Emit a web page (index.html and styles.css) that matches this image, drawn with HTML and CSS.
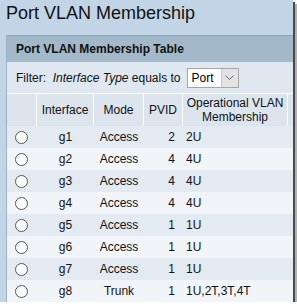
FILE: index.html
```html
<!DOCTYPE html>
<html>
<head>
<title>Port VLAN Membership</title>
<meta name="viewport" content="width=device-width, initial-scale=1">
<link rel="stylesheet" href="styles.css">
</head>
<body>
<div class="frame">
  <h1 class="title">Port VLAN Membership</h1>
  <div class="panel">
    <div class="panelHead">Port VLAN Membership Table</div>
    <div class="filter">
      <span>Filter:&nbsp; <i>Interface Type</i> equals to</span>
      <span class="select">
        <span class="selectValue">Port</span>
        <span class="selectArrow">
          <svg width="9" height="6" viewBox="0 0 9 6"><path d="M0.5 0.5 L4.5 4.5 L8.5 0.5" fill="none" stroke="#666" stroke-width="1"/></svg>
        </span>
      </span>
    </div>
    <table class="grid">
      <colgroup>
        <col class="cRadio"><col class="cIf"><col class="cMode"><col class="cPvid"><col class="cVlan"><col>
      </colgroup>
      <thead>
        <tr>
          <th></th>
          <th>Interface</th>
          <th>Mode</th>
          <th>PVID</th>
          <th>Operational VLAN<br>Membership</th>
          <th></th>
        </tr>
      </thead>
      <tbody>
        <tr><td class="radio"><input type="radio" name="port"></td><td class="center">g1</td><td class="center">Access</td><td class="num">2</td><td class="vlan">2U</td><td></td></tr>
        <tr><td class="radio"><input type="radio" name="port"></td><td class="center">g2</td><td class="center">Access</td><td class="num">4</td><td class="vlan">4U</td><td></td></tr>
        <tr><td class="radio"><input type="radio" name="port"></td><td class="center">g3</td><td class="center">Access</td><td class="num">4</td><td class="vlan">4U</td><td></td></tr>
        <tr><td class="radio"><input type="radio" name="port"></td><td class="center">g4</td><td class="center">Access</td><td class="num">4</td><td class="vlan">4U</td><td></td></tr>
        <tr><td class="radio"><input type="radio" name="port"></td><td class="center">g5</td><td class="center">Access</td><td class="num">1</td><td class="vlan">1U</td><td></td></tr>
        <tr><td class="radio"><input type="radio" name="port"></td><td class="center">g6</td><td class="center">Access</td><td class="num">1</td><td class="vlan">1U</td><td></td></tr>
        <tr><td class="radio"><input type="radio" name="port"></td><td class="center">g7</td><td class="center">Access</td><td class="num">1</td><td class="vlan">1U</td><td></td></tr>
        <tr><td class="radio"><input type="radio" name="port"></td><td class="center">g8</td><td class="center">Trunk</td><td class="num">1</td><td class="vlan">1U,2T,3T,4T</td><td></td></tr>
      </tbody>
    </table>
  </div>
</div>
</body>
</html>
```

FILE: styles.css
```css
html, body {margin: 0; padding: 0; background: #ffffff;}
body {font-family: "Liberation Sans", Arial, sans-serif; font-size: 12px; color: #111;}

.frame {width: 293px; height: 302px; overflow: hidden; background: #c2d5e6; box-shadow: 2px 2px 0 #4a4a4a, 4px 4px 1px #b0b0b0;}

.title {margin: 0 0 11px 0; padding: 2px 6px 0; font-size: 18px; font-weight: normal; line-height: 22px; color: #111;}

.panel {margin-left: 6px; width: 300px; border-left: 1px solid #9db3c7; border-top: 1px solid #8fa7bb; border-bottom: 1px solid #9bb0c4;}

.panelHead {height: 26px; line-height: 26px; padding-left: 9px; background: #a3b8c8; font-weight: bold; color: #111;}

.filter {height: 31px; display: flex; align-items: center; padding-left: 9px; background: #dfe8f1;}
.filter i {font-style: italic;}

.select {display: inline-flex; margin-left: 6px; height: 18px; border: 1px solid #a6a6a6; background: #fff;}
.selectValue {width: 29px; padding-left: 4px; line-height: 18px; font-size: 12px; color: #000;}
.selectArrow {width: 16px; display: flex; align-items: center; justify-content: center; background: #e3e3e3; border-left: 1px solid #c8c8c8;}

.grid {width: 300px; table-layout: fixed; border-collapse: separate; border-spacing: 0; font: inherit;}
.grid col.cRadio {width: 30px;}
.grid col.cIf {width: 57px;}
.grid col.cMode {width: 50px;}
.grid col.cPvid {width: 39px;}
.grid col.cVlan {width: 105px;}

.grid th {height: 32px; padding: 0; font-weight: normal; line-height: 14px; text-align: center; background: #dce5ee; border-top: 1px solid #ffffff; border-right: 1px solid #ffffff; color: #111;}
.grid td {height: 22px; padding: 0; line-height: 14px; white-space: nowrap; color: #111;}
.grid tbody tr:nth-child(odd) td {background: #e3eaf2;}
.grid tbody tr:nth-child(even) td {background: #f1f4f9;}

.grid td.radio {text-align: center; padding-right: 1px;}
.grid td.center {text-align: center;}
.grid td.num {text-align: right; padding-right: 8px;}
.grid td.vlan {padding-left: 3px;}

.radio input {appearance: none; -webkit-appearance: none; width: 13px; height: 13px; margin: 0; vertical-align: middle; border: 1px solid #555; border-radius: 50%; background: #fff;}
```
